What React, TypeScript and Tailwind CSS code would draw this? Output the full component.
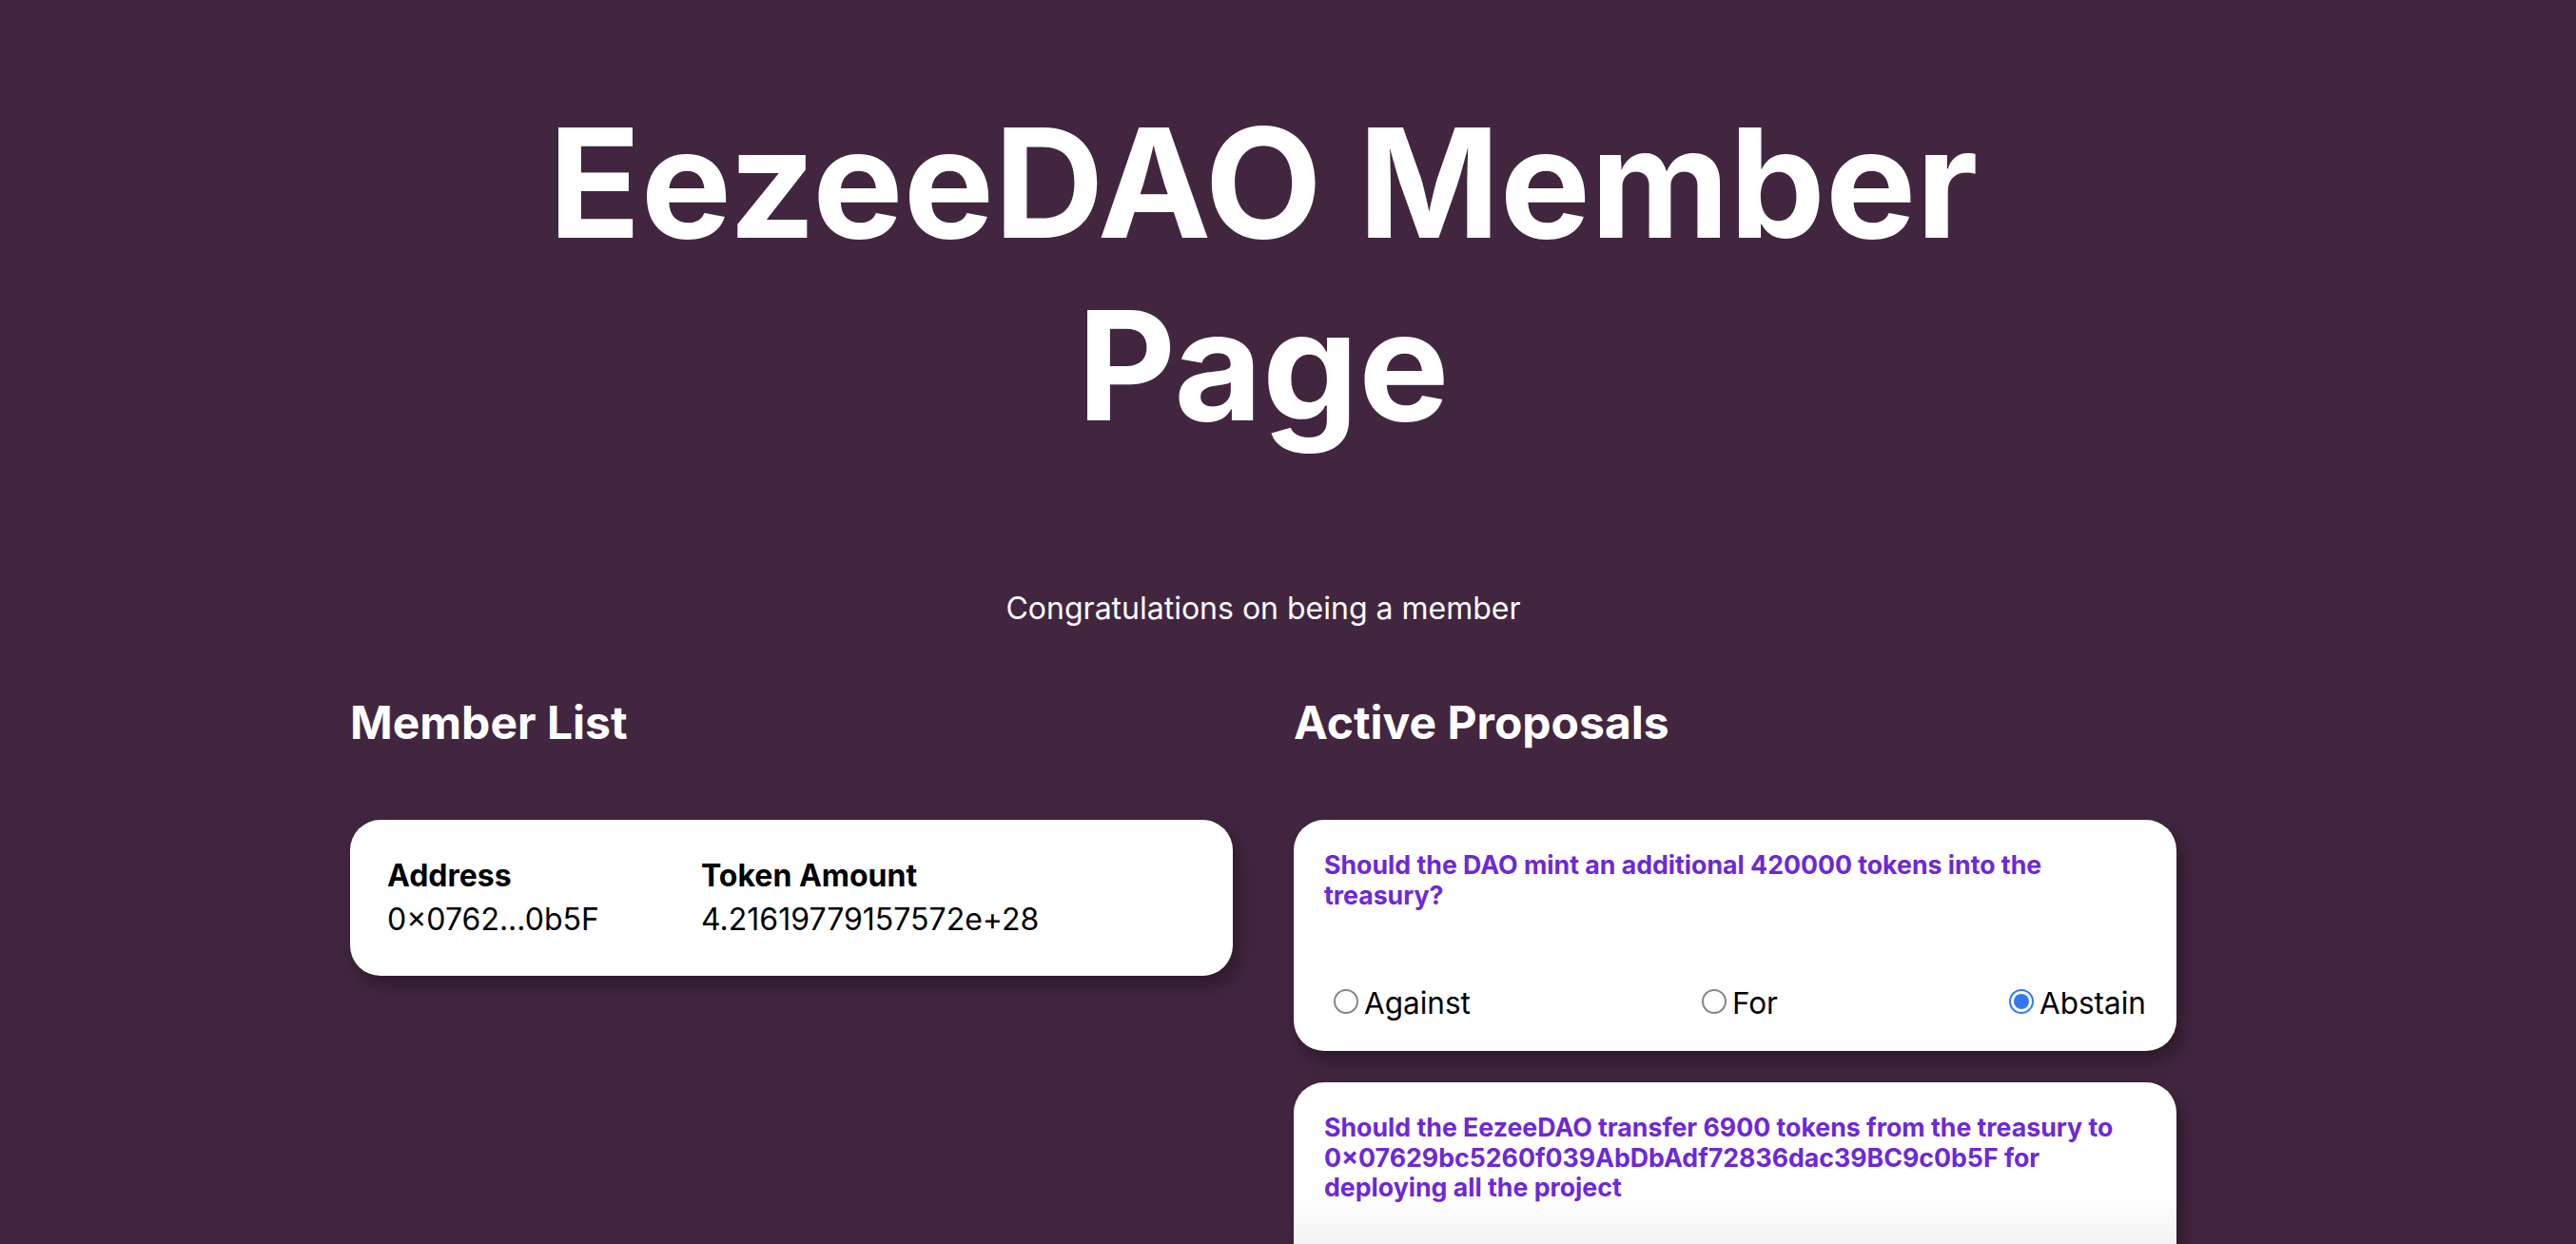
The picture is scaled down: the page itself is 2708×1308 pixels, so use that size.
import React from "react";

const font = { fontFamily: "Inter, 'Noto Sans', sans-serif" };

function Radio({ checked }: { checked?: boolean }) {
  if (checked) {
    return (
      <span className="inline-block align-baseline ml-[10px] mr-[6px] mt-[6px] w-[26px] h-[26px] rounded-full border-2 border-[#3478f6] bg-white p-[3px]">
        <span className="block w-full h-full rounded-full bg-[#3478f6]" />
      </span>
    );
  }
  return (
    <span className="inline-block align-baseline ml-[10px] mr-[6px] mt-[6px] w-[26px] h-[26px] rounded-full border-2 border-[#858585] bg-white" />
  );
}

function Votes({ selected }: { selected: string }) {
  const opts = ["Against", "For", "Abstain"];
  return (
    <div className="flex justify-between mt-[77px]">
      {opts.map((o) => (
        <label key={o} className="block text-[31.5px] leading-[36px] text-black">
          <Radio checked={o === selected} />
          {o}
        </label>
      ))}
    </div>
  );
}

function Proposal({ text, selected, fade }: { text: string; selected: string; fade?: boolean }) {
  return (
    <div
      className={
        "rounded-[32px] p-[32px] shadow-[6px_10px_20px_rgba(0,0,0,0.35)] " +
        (fade
          ? "bg-[linear-gradient(to_bottom,#ffffff_120px,#f2f2f2_175px,#f2f2f2)]"
          : "bg-white")
      }
    >
      <p className="text-[26.7px] font-bold leading-[31.5px] text-[#6d28d9]">{text}</p>
      <Votes selected={selected} />
    </div>
  );
}

export default function App() {
  return (
    <div className="min-h-screen w-full bg-[#422640] overflow-hidden" style={font}>
      <div className="w-[2656px] flex flex-col items-center text-white">
        <h1 className="mt-[96px] text-[160px] leading-[192px] font-bold text-center tracking-normal">
          EezeeDAO Member
          <br />
          Page
        </h1>
        <p className="mt-[136px] text-[32px] leading-[48px] font-normal">Congratulations on being a member</p>
        <div className="mt-[60px] grid grid-cols-[928px_928px] gap-x-[64px]">
          <div>
            <h2 className="text-[48px] leading-[72px] font-bold">Member List</h2>
            <div className="mt-[66px] bg-white rounded-[32px] px-[39px] pt-[36px] pb-[36px] shadow-[6px_10px_20px_rgba(0,0,0,0.35)] text-black">
              <div className="grid grid-cols-[330px_1fr] text-[32px] leading-[46px]">
                <div className="font-bold">Address</div>
                <div className="font-bold">Token Amount</div>
                <div>0×0762...0b5F</div>
                <div>4.21619779157572e+28</div>
              </div>
            </div>
          </div>
          <div>
            <h2 className="text-[48px] leading-[72px] font-bold">Active Proposals</h2>
            <div className="mt-[66px] flex flex-col gap-[33px]">
              <Proposal
                text="Should the DAO mint an additional 420000 tokens into the treasury?"
                selected="Abstain"
              />
              <Proposal
                text="Should the EezeeDAO transfer 6900 tokens from the treasury to 0×07629bc5260f039AbDbAdf72836dac39BC9c0b5F for deploying all the project"
                selected=""
                fade
              />
            </div>
          </div>
        </div>
        <div className="h-[80px]" />
      </div>
    </div>
  );
}
